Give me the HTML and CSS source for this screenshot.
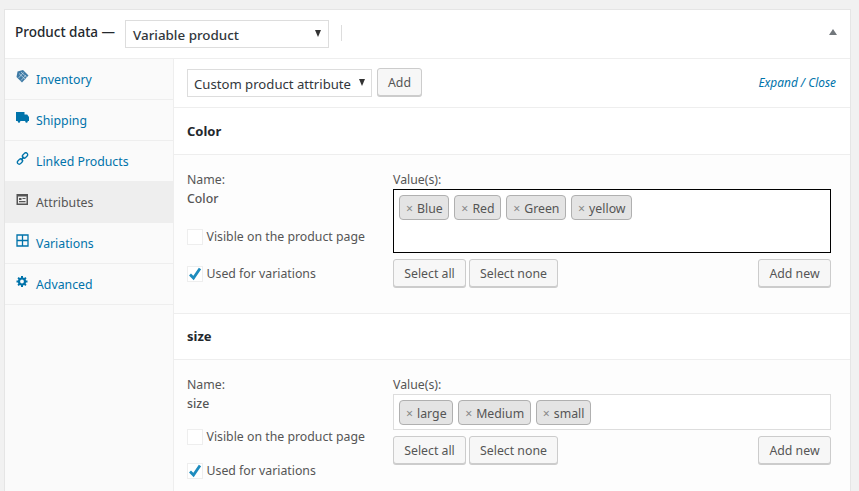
FILE: index.html
```html
<!DOCTYPE html>
<html lang="en">
<head>
    <meta charset="UTF-8">
    <title>Product data</title>
    <link rel="stylesheet" href="styles.css">
</head>
<body>
<div class="panel">
    <div class="panel-head">
        <span class="panel-title">Product data —</span>
        <div class="select select-type">Variable product<span class="caret"></span></div>
        <span class="head-sep"></span>
        <span class="collapse-arrow"></span>
    </div>
    <div class="panel-main">
        <ul class="tabs">
            <li class="tab">
                <svg class="tab-icon" viewBox="0 0 13 13"><path d="M7 0 12.500 5.500 6 12.500.5 7 1.500 1.500Z" fill="#3f7ba6"/><path d="M3 3.500 9.500 9.500M5 2 11 7.500M2.500 8 7.500 2.500M5 10.500 10 5" stroke="#cfe0ec" stroke-width=".7"/></svg>
                Inventory
            </li>
            <li class="tab">
                <svg class="tab-icon" viewBox="0 0 13 13"><path d="M0 1h8.500v9H0ZM8.500 3.500h2.700L13 6v4H8.500Z" fill="#0073aa"/><circle cx="3" cy="10.500" r="1.200" fill="#0073aa"/><circle cx="10.500" cy="10.500" r="1.200" fill="#0073aa"/></svg>
                Shipping
            </li>
            <li class="tab">
                <svg class="tab-icon" viewBox="0 0 13 13"><g fill="none" stroke="#0073aa" stroke-width="1.400"><rect x="6" y="1.600" width="6" height="3.800" rx="1.900" transform="rotate(-45 9 3.500)"/><rect x="1" y="7.600" width="6" height="3.800" rx="1.900" transform="rotate(-45 4 9.500)"/><path d="M4.800 8.200 8.200 4.800"/></g></svg>
                Linked Products
            </li>
            <li class="tab tab-active">
                <svg class="tab-icon" viewBox="0 0 13 13"><path d="M.5 1h11.500v11H.5Z" fill="#555"/><path d="M2 3.500h8.500V10.500H2Z" fill="#eee"/><path d="M3 5h2.500v2H3ZM6.500 5h3v1h-3ZM3 8h6.500v1.200H3Z" fill="#555"/></svg>
                Attributes
            </li>
            <li class="tab">
                <svg class="tab-icon" viewBox="0 0 13 13"><path d="M1 1h11v11H1ZM6.500 1v11M1 6.500h11" fill="none" stroke="#0073aa" stroke-width="1.300"/></svg>
                Variations
            </li>
            <li class="tab">
                <svg class="tab-icon" viewBox="0 0 13 13"><circle cx="6" cy="6.500" r="3" fill="none" stroke="#0073aa" stroke-width="2.200"/><path d="M6 1v2.200M6 9.800V12M.5 6.500h2.200M9.300 6.500h2.200M2.100 2.600l1.500 1.500M8.400 8.900l1.500 1.500M2.100 10.400l1.500-1.500M8.400 4.100l1.500-1.500" stroke="#0073aa" stroke-width="2"/></svg>
                Advanced
            </li>
        </ul>
        <div class="content">
            <div class="toolbar">
                <div class="select select-attr">Custom product attribute<span class="caret"></span></div>
                <button class="btn btn-add">Add</button>
                <span class="toolbar-links"><a>Expand</a> / <a>Close</a></span>
            </div>

            <h3 class="attr-head">Color</h3>
            <div class="attr-body attr-color">
                <div class="attr-left">
                    <div class="field-label">Name:</div>
                    <strong class="attr-name">Color</strong>
                    <label class="check"><span class="box"></span>Visible on the product page</label>
                    <label class="check"><span class="box box-on"><svg viewBox="0 0 16 16"><path d="M3 8.500 6.500 12 13 2.500" fill="none" stroke="#1e8cbe" stroke-width="2.800"/></svg></span>Used for variations</label>
                </div>
                <div class="attr-right">
                    <div class="field-label">Value(s):</div>
                    <div class="values values-focus">
                        <span class="chip"><i>×</i>Blue</span>
                        <span class="chip"><i>×</i>Red</span>
                        <span class="chip"><i>×</i>Green</span>
                        <span class="chip"><i>×</i>yellow</span>
                    </div>
                    <div class="value-btns">
                        <button class="btn btn-all">Select all</button>
                        <button class="btn btn-none">Select none</button>
                        <button class="btn btn-new">Add new</button>
                    </div>
                </div>
            </div>

            <h3 class="attr-head attr-head-2">size</h3>
            <div class="attr-body attr-size">
                <div class="attr-left">
                    <div class="field-label">Name:</div>
                    <strong class="attr-name">size</strong>
                    <label class="check check-first"><span class="box"></span>Visible on the product page</label>
                    <label class="check"><span class="box box-on"><svg viewBox="0 0 16 16"><path d="M3 8.500 6.500 12 13 2.500" fill="none" stroke="#1e8cbe" stroke-width="2.800"/></svg></span>Used for variations</label>
                </div>
                <div class="attr-right">
                    <div class="field-label">Value(s):</div>
                    <div class="values">
                        <span class="chip"><i>×</i>large</span>
                        <span class="chip"><i>×</i>Medium</span>
                        <span class="chip"><i>×</i>small</span>
                    </div>
                    <div class="value-btns">
                        <button class="btn btn-all">Select all</button>
                        <button class="btn btn-none">Select none</button>
                        <button class="btn btn-new">Add new</button>
                    </div>
                </div>
            </div>
        </div>
    </div>
</div>
</body>
</html>
```

FILE: styles.css
```css
* {
    box-sizing: border-box;
}

html, body {
    height: 100%;
    overflow: hidden;
}

body {
    margin: 0;
    background: #f1f1f1;
    color: #555;
    font-family: "Noto Sans", "Open Sans", sans-serif;
    font-size: 12.300px;
}

.panel {
    margin: 9px 8px 0 4px;
    background: #fff;
    border: 1px solid #e5e5e5;
    border-bottom: 0;
}

.panel-head {
    display: flex;
    align-items: center;
    height: 49px;
    padding: 0 10px;
    border-bottom: 1px solid #eee;
}

.panel-title {
    flex: none;
    width: 110px;
    margin-top: -4px;
    color: #23282d;
    font-size: 13.500px;
    font-weight: 500;
}

.select {
    display: flex;
    align-items: center;
    justify-content: space-between;
    height: 28px;
    padding: 1px 7px 0;
    background: #fff;
    border: 1px solid #ddd;
    color: #32373c;
}

.select-type {
    width: 204px;
    font-size: 13.400px;
    font-weight: 500;
}

.select-attr {
    width: 185px;
    padding: 1px 6px 0;
    font-size: 13.150px;
}

.caret {
    width: 0;
    height: 0;
    margin-top: -3px;
    border-left: 3.500px solid transparent;
    border-right: 3.500px solid transparent;
    border-top: 7px solid #333;
}

.head-sep {
    width: 1px;
    height: 16px;
    margin: -2px 0 0 12px;
    background: #ddd;
}

.collapse-arrow {
    width: 0;
    height: 0;
    margin: -4px 3px 0 auto;
    border-left: 4px solid transparent;
    border-right: 4px solid transparent;
    border-bottom: 6px solid #72777c;
}

.panel-main {
    display: flex;
    height: 432px;
}

.tabs {
    flex: none;
    width: 169px;
    margin: 0;
    padding: 0;
    list-style: none;
    background: #fafafa;
    border-right: 1px solid #eee;
}

.tab {
    display: flex;
    align-items: center;
    gap: 7px;
    height: 41px;
    padding-left: 11px;
    color: #0073aa;
    border-bottom: 1px solid #eee;
}

.tab-active {
    background: #eee;
    color: #555;
}

.tab-icon {
    flex: none;
    width: 13px;
    height: 13px;
    margin-top: -5px;
}

.content {
    flex: 1;
    min-width: 0;
    background: #fdfdfd;
}

.toolbar {
    display: flex;
    align-items: center;
    gap: 5px;
    height: 49px;
    padding: 0 13px;
    background: #fff;
    border-bottom: 1px solid #eee;
}

.toolbar-links {
    margin: -2px 1px 0 auto;
    color: #0073aa;
    font-size: 11.900px;
    font-style: italic;
}

.btn {
    height: 28px;
    padding: 0;
    background: #f7f7f7;
    border: 1px solid #ccc;
    border-radius: 3px;
    box-shadow: 0 1px 0 #ccc;
    color: #555;
    font: inherit;
}

.btn-add {
    width: 45px;
    margin-top: -2px;
}

.attr-head {
    height: 47px;
    margin: 0;
    padding: 14px 13px 0;
    background: #fff;
    color: #23282d;
    font-size: 13px;
    font-weight: 700;
    border-bottom: 1px solid #eee;
}

.attr-head-2 {
    height: 46px;
    padding-top: 13px;
}

.attr-body {
    display: flex;
    padding: 16px 19px 0 13px;
}

.attr-color {
    height: 159px;
    border-bottom: 1px solid #eee;
}

.attr-left {
    flex: none;
    width: 206px;
}

.attr-right {
    flex: 1;
}

.field-label {
    line-height: 18px;
}

.attr-name {
    display: block;
    margin-top: 1px;
    font-weight: 500;
    line-height: 18px;
}

.check {
    display: flex;
    align-items: center;
    gap: 3.500px;
    height: 17px;
    margin-top: 20px;
}

.attr-size .check {
    margin-top: 17px;
}

.attr-size .check-first {
    margin-top: 15px;
}

.box {
    flex: none;
    width: 16px;
    height: 16px;
    background: #fff;
    border: 1px solid #eee;
}

.box svg {
    display: block;
    width: 16px;
    height: 16px;
    margin: -1px;
}

.values {
    display: flex;
    flex-wrap: wrap;
    align-content: flex-start;
    gap: 5px;
    height: 36px;
    padding: 5px;
    background: #fff;
    border: 1px solid #ddd;
}

.values-focus {
    height: 64px;
    border-color: #000;
}

.chip {
    display: flex;
    align-items: center;
    height: 25px;
    padding: 1px 5.600px 0 6px;
    background: #e4e4e4;
    border: 1px solid #b0b0b0;
    border-radius: 4px;
}

.chip i {
    margin-right: 4px;
    color: #888;
    font-style: normal;
}

.value-btns {
    display: flex;
    gap: 3px;
    margin-top: 6px;
}

.btn-all {
    width: 73px;
}

.btn-none {
    width: 89px;
}

.btn-new {
    width: 73px;
    margin-left: auto;
}
```
